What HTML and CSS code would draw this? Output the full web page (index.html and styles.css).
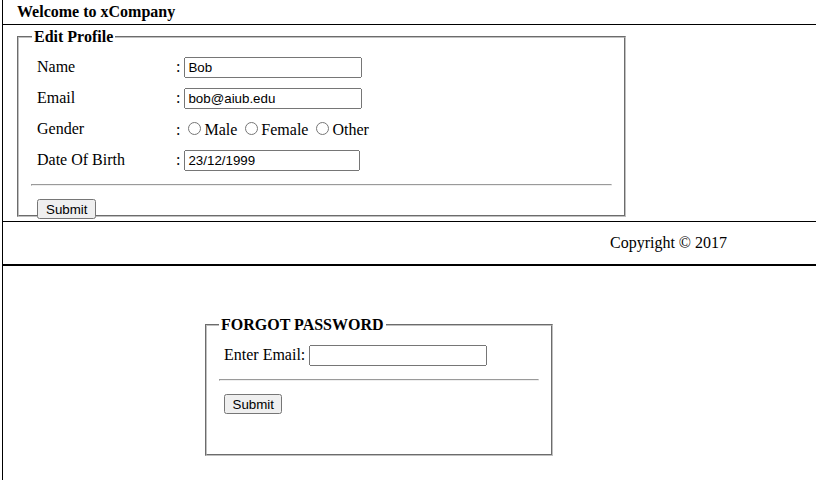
FILE: index.html
```html
<!DOCTYPE html>
<html>
<head>
<meta charset="utf-8">
<title>xCompany</title>
<link rel="stylesheet" href="styles.css">
</head>
<body>
<div class="frame">
  <header class="top">Welcome to xCompany</header>
  <main class="main">
    <fieldset class="profile">
      <legend>Edit Profile</legend>
      <div class="rows">
        <span class="lbl">Name</span>
        <span class="val">: <input class="txt" type="text" value="Bob"></span>
        <span class="lbl">Email</span>
        <span class="val">: <input class="txt" type="text" value="bob@aiub.edu"></span>
        <span class="lbl">Gender</span>
        <span class="val">:&nbsp;<label><input type="radio" name="g">Male</label> <label><input type="radio" name="g">Female</label> <label><input type="radio" name="g">Other</label></span>
        <span class="lbl">Date Of Birth</span>
        <span class="val">: <input class="txt dob" type="text" value="23/12/1999"></span>
      </div>
      <hr>
      <div class="actions"><button type="button">Submit</button></div>
    </fieldset>
  </main>
  <footer class="foot">Copyright © 2017</footer>
  <section class="forgot">
    <fieldset class="fp">
      <legend>FORGOT PASSWORD</legend>
      <div class="fprow">Enter Email: <input class="txt" type="text"></div>
      <hr>
      <div class="actions"><button type="button">Submit</button></div>
    </fieldset>
  </section>
</div>
</body>
</html>
```

FILE: styles.css
```css
html, body {
  margin: 0;
  padding: 0;
}
body {
  font-family: "Liberation Serif", "Times New Roman", serif;
  font-size: 16px;
  color: #000;
  background: #fff;
}
.frame {
  margin-left: 2px;
  border-left: 1px solid #000;
  min-height: 480px;
}
.top {
  height: 24px;
  border-bottom: 1px solid #000;
  display: flex;
  align-items: center;
  padding-left: 14px;
  font-weight: bold;
}
.main {
  height: 196px;
  box-sizing: border-box;
  padding: 3px 0 0 14px;
}
fieldset {
  margin: 0;
  border: 2px groove #c0c0c0;
  box-sizing: border-box;
  padding: 5.6px 12px 10px;
}
legend {
  padding: 0 2px;
  font-weight: bold;
}
.profile legend {
  margin-left: 1px;
}
.profile {
  width: 609px;
  height: 189px;
}
.rows {
  display: grid;
  grid-template-columns: 139px auto;
  grid-auto-rows: 31px;
  align-items: center;
  padding-left: 6px;
}
.txt {
  font-family: "Liberation Sans", Arial, sans-serif;
  font-size: 13.333px;
  width: 178px;
  height: 21px;
  box-sizing: border-box;
  margin: 0;
}
.dob {
  width: 176px;
}
.val input[type="radio"] {
  margin: 3px 3px 0 4px;
}
hr {
  margin: 8px 0;
}
.actions {
  padding: 5px 0 0 6px;
}
button {
  font-family: "Liberation Sans", Arial, sans-serif;
  font-size: 13.333px;
  height: 20px;
  padding: 1px 7px;
  margin: 0;
}
.fp button {
  padding: 1px 6.5px;
}
.foot {
  height: 42px;
  border-top: 1px solid #000;
  border-bottom: 2px solid #000;
  display: flex;
  align-items: center;
  justify-content: flex-end;
  padding-right: 89px;
}
.forgot {
  padding: 50px 0 0 202px;
}
.fp {
  width: 348px;
  height: 140px;
}
.fprow {
  height: 31px;
  display: flex;
  align-items: center;
  gap: 4px;
  padding-left: 5px;
}
.fp .actions {
  padding-left: 5px;
}
```
